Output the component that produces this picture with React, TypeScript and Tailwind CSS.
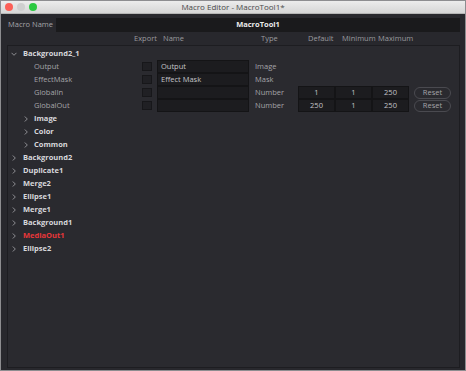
import React from "react";

type Param = {
  label: string;
  name: string;
  type: string;
  values?: [string, string, string];
};

const params: Param[] = [
  { label: "Output", name: "Output", type: "Image" },
  { label: "EffectMask", name: "Effect Mask", type: "Mask" },
  { label: "GlobalIn", name: "", type: "Number", values: ["1", "1", "250"] },
  { label: "GlobalOut", name: "", type: "Number", values: ["250", "1", "250"] },
];

const subGroups = ["Image", "Color", "Common"];

const tools = [
  "Background2",
  "Duplicate1",
  "Merge2",
  "Ellipse1",
  "Merge1",
  "Background1",
  "MediaOut1",
  "Ellipse2",
];

function Chevron({ open = false }: { open?: boolean }) {
  return (
    <svg width="6" height="6" viewBox="0 0 6 6" className="shrink-0">
      {open ? (
        <polyline points="0.5,1.8 3,4.3 5.5,1.8" fill="none" stroke="#9a9a9e" strokeWidth="0.9" />
      ) : (
        <polyline points="1.8,0.5 4.3,3 1.8,5.5" fill="none" stroke="#9a9a9e" strokeWidth="0.9" />
      )}
    </svg>
  );
}

function ParamRow({ p }: { p: Param }) {
  return (
    <div className="flex h-[13px] items-center">
      <div className="w-[134px] pl-[26px] text-[#a4a4a8]">{p.label}</div>
      <div className="h-[9px] w-[10px] border border-[#17171a] bg-[#202024]" />
      <div className="ml-[5px] flex h-[13px] w-[92px] items-center border border-[#141416] bg-[#1c1c1f] px-[3px] text-[#c4c4c8]">
        {p.name}
      </div>
      <div className="ml-[6px] w-[43px] text-[#a4a4a8]">{p.type}</div>
      {p.values && (
        <>
          <div className="flex">
            {p.values.map((v, i) => (
              <div
                key={i}
                className="flex h-[13px] w-[37px] items-center justify-center border border-[#141416] bg-[#1c1c1f] text-[#c4c4c8]"
              >
                {v}
              </div>
            ))}
          </div>
          <div className="ml-[5px] flex h-[12px] w-[37px] items-center justify-center rounded-full border border-[#4a4a50] text-[#a4a4a8]">
            Reset
          </div>
        </>
      )}
    </div>
  );
}

export default function App() {
  return (
    <div
      className="flex h-[371px] w-[466px] flex-col overflow-hidden border border-[#8d8d90] bg-[#28282d] text-[7.5px] leading-none"
      style={{ fontFamily: '"Open Sans", "Noto Sans", sans-serif' }}
    >
      {/* Title bar */}
      <div className="relative flex h-[13px] shrink-0 items-center justify-center border-b border-[#b5b5b5] bg-gradient-to-b from-[#ececec] to-[#d6d6d6]">
        <div className="absolute left-[4px] top-[2px] flex gap-[4px]">
          <div className="h-[8px] w-[8px] rounded-full bg-[#fc5f57]" />
          <div className="h-[8px] w-[8px] rounded-full bg-[#cfcfcf]" />
          <div className="h-[8px] w-[8px] rounded-full bg-[#2ac940]" />
        </div>
        <span className="text-[8px] text-[#4a4a4a]">Macro Editor - MacroTool1*</span>
      </div>

      {/* Macro name */}
      <div className="mt-[4px] flex h-[14px] items-center pl-[7px] pr-[5px]">
        <span className="w-[48px] text-[#a4a4a8]">Macro Name</span>
        <div className="flex h-[14px] flex-1 items-center justify-center bg-[#1a1a1c] font-bold text-[#ececec]">
          MacroTool1
        </div>
      </div>

      {/* Column headers */}
      <div className="flex h-[13px] items-center text-[#9a9a9e]">
        <span className="ml-[133px] w-[29px]">Export</span>
        <span className="w-[98px]">Name</span>
        <span className="w-[47px]">Type</span>
        <span className="w-[34px]">Default</span>
        <span className="w-[36px]">Minimum</span>
        <span>Maximum</span>
      </div>

      {/* Panel */}
      <div className="mb-[2px] ml-[6px] mr-[5px] flex-1 border border-[#1d1d21] bg-[#2a2a2f] pt-[1px]">
        <div className="flex h-[13px] items-center gap-[6px] pl-[3px] font-bold text-[#d8d8dc]">
          <Chevron open />
          <span>Background2_1</span>
        </div>
        {params.map((p) => (
          <ParamRow key={p.label} p={p} />
        ))}
        {subGroups.map((g) => (
          <div key={g} className="flex h-[13px] items-center gap-[5px] pl-[15px] font-bold text-[#d8d8dc]">
            <Chevron />
            <span>{g}</span>
          </div>
        ))}
        {tools.map((t) => (
          <div
            key={t}
            className={`flex h-[13px] items-center gap-[6px] pl-[3px] font-bold ${
              t === "MediaOut1" ? "text-[#e8373a]" : "text-[#d8d8dc]"
            }`}
          >
            <Chevron />
            <span>{t}</span>
          </div>
        ))}
      </div>
    </div>
  );
}
